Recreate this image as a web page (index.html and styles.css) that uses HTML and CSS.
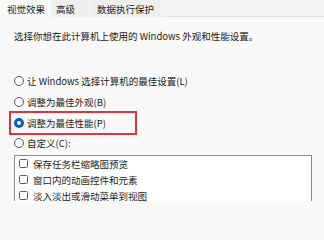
FILE: index.html
```html
<!DOCTYPE html>
<html lang="zh-CN">
<head>
<meta charset="utf-8">
<link rel="stylesheet" href="styles.css">
</head>
<body>
<div class="tabs">
  <div class="tab active">视觉效果</div>
  <div class="tab">高级</div>
  <div class="tab">数据执行保护</div>
</div>
<div class="panel">
  <p class="desc">选择你想在此计算机上使用的 Windows 外观和性能设置。</p>
  <div class="options">
    <div class="opt"><span class="radio"></span><span>让 Windows 选择计算机的最佳设置(L)</span></div>
    <div class="opt"><span class="radio"></span><span>调整为最佳外观(B)</span></div>
    <div class="opt"><span class="mark"><span class="radio checked"></span><span>调整为最佳性能(P)</span></span></div>
    <div class="opt"><span class="radio"></span><span>自定义(C):</span></div>
  </div>
  <div class="list">
    <div class="item"><span class="check"></span><span>保存任务栏缩略图预览</span></div>
    <div class="item"><span class="check"></span><span>窗口内的动画控件和元素</span></div>
    <div class="item"><span class="check"></span><span>淡入淡出或滑动菜单到视图</span></div>
  </div>
</div>
</body>
</html>
```
FILE: styles.css
```css
html, body {
  margin: 0;
  padding: 0;
}
body {
  width: 324px;
  height: 201px;
  overflow: hidden;
  background: #f9f9f9;
  color: #1b1b1b;
  font-family: "Noto Sans CJK SC", "Noto Sans", sans-serif;
  font-size: 9.5px;
}
.tabs {
  display: flex;
  align-items: flex-start;
  height: 17px;
  background: #f3f3f3;
  border-bottom: 1px solid #e4e4e4;
  box-sizing: border-box;
}
.tab {
  display: flex;
  align-items: center;
  height: 17px;
  line-height: 12px;
  padding: 0 7px;
  background: #efefef;
  border-right: 1px solid #f7f7f7;
  box-sizing: border-box;
  white-space: nowrap;
  flex: none;
}
.tab.active {
  background: #f9f9f9;
  padding: 0 5px 0 7px;
  height: 18px;
  padding-bottom: 1px;
}
.tab:nth-child(2) { padding: 0 14px 0 5px; }
.panel {
  display: flex;
  flex-direction: column;
  padding: 0 12px 0 14px;
}
.desc {
  margin: 12px 0 0;
  line-height: 14px;
  white-space: nowrap;
}
.options {
  margin-top: 28px;
  display: flex;
  flex-direction: column;
}
.opt {
  display: flex;
  align-items: center;
  height: 20.7px;
  white-space: nowrap;
}
.radio {
  width: 10px;
  height: 10px;
  border: 1px solid #5a5a5a;
  border-radius: 50%;
  box-sizing: border-box;
  background: #fbfbfb;
  margin-right: 3px;
  flex: none;
}
.radio.checked {
  border: 3px solid #005fb8;
  background: #ffffff;
}
.mark {
  display: flex;
  align-items: center;
  margin-left: -4px;
  padding: 0 30px 0 4px;
  height: 22px;
  outline: 2px solid #d9363e;
  outline-offset: -1px;
}
.list {
  margin-top: 1px;
  background: #ffffff;
  border: 1px solid #8b8b8b;
  border-bottom: none;
  height: 60px;
  display: flex;
  flex-direction: column;
}
.item {
  display: flex;
  align-items: center;
  height: 16px;
  padding-left: 4px;
  white-space: nowrap;
}
.check {
  width: 9px;
  height: 9px;
  border: 1px solid #5e5e5e;
  border-radius: 1.5px;
  box-sizing: border-box;
  background: #fff;
  margin-right: 5px;
  flex: none;
}
```
